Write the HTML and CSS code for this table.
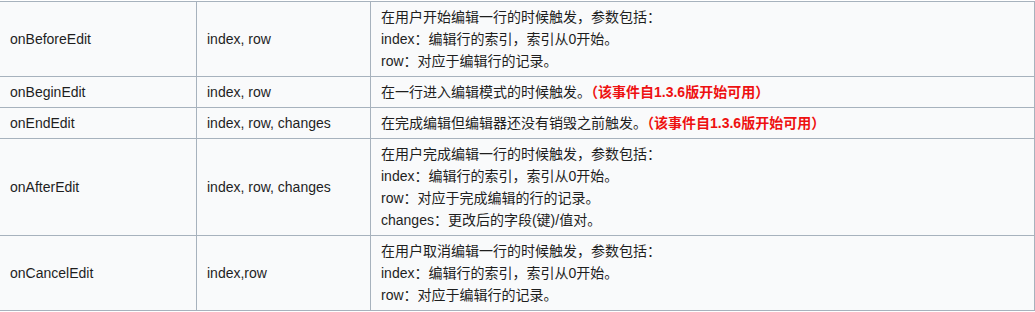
FILE: index.html
```html
<!DOCTYPE html>
<html lang="zh-CN">
<head>
<meta charset="utf-8">
<title>DataGrid 编辑事件</title>
<link rel="stylesheet" href="styles.css">
</head>
<body>
<table class="doc-table">
  <colgroup>
    <col class="c-name">
    <col class="c-args">
    <col class="c-desc">
  </colgroup>
  <tbody>
    <tr>
      <td>onBeforeEdit</td>
      <td>index, row</td>
      <td>在用户开始编辑一行的时候触发，参数包括：<br>index：编辑行的索引，索引从0开始。<br>row：对应于编辑行的记录。</td>
    </tr>
    <tr>
      <td>onBeginEdit</td>
      <td>index, row</td>
      <td>在一行进入编辑模式的时候触发。<span class="note">（该事件自1.3.6版开始可用）</span></td>
    </tr>
    <tr>
      <td>onEndEdit</td>
      <td>index, row, changes</td>
      <td>在完成编辑但编辑器还没有销毁之前触发。<span class="note">（该事件自1.3.6版开始可用）</span></td>
    </tr>
    <tr>
      <td>onAfterEdit</td>
      <td>index, row, changes</td>
      <td>在用户完成编辑一行的时候触发，参数包括：<br>index：编辑行的索引，索引从0开始。<br>row：对应于完成编辑的行的记录。<br>changes：更改后的字段(键)/值对。</td>
    </tr>
    <tr>
      <td>onCancelEdit</td>
      <td>index,row</td>
      <td>在用户取消编辑一行的时候触发，参数包括：<br>index：编辑行的索引，索引从0开始。<br>row：对应于编辑行的记录。</td>
    </tr>
  </tbody>
</table>
</body>
</html>
```

FILE: styles.css
```css
html, body {
  margin: 0;
  padding: 0;
  background: #ffffff;
}

body {
  font-family: "Liberation Sans", Arial, "Noto Sans CJK SC", sans-serif;
  font-size: 14px;
  color: #1e1e1e;
}

.doc-table {
  width: 1035px;
  margin-top: 1px;
  table-layout: fixed;
  border-collapse: separate;
  border-spacing: 0;
  border-top: 1px solid #a7b2bd;
  background: #f9fafb;
}

.c-name { width: 197px; }
.c-args { width: 174px; }
.c-desc { width: 664px; }

.doc-table td {
  padding: 4px 10px;
  line-height: 22px;
  vertical-align: middle;
  border-right: 1px solid #a7b2bd;
  border-bottom: 1px solid #a7b2bd;
  text-align: left;
}

.note {
  color: #ee1111;
  font-weight: bold;
}
```
